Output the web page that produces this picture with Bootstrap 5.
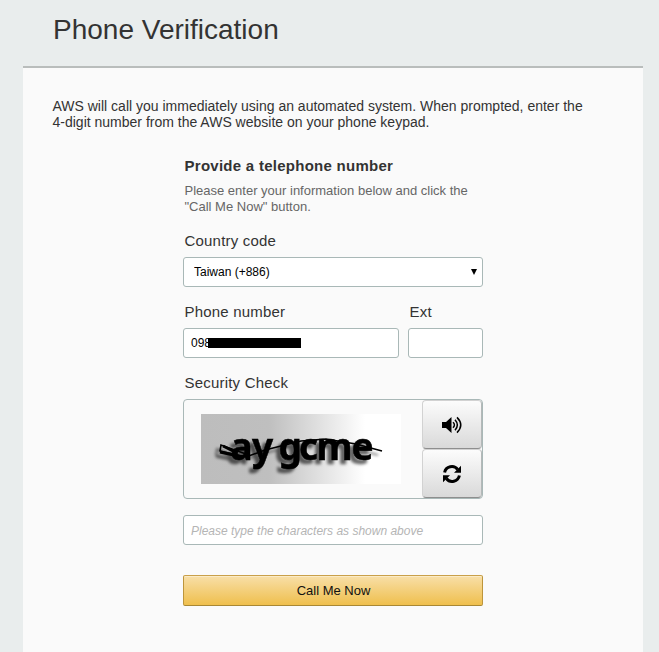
<!DOCTYPE html>
<html lang="en">
<head>
<meta charset="utf-8">
<meta name="viewport" content="width=device-width, initial-scale=1">
<title>Phone Verification</title>
<link href="https://cdn.jsdelivr.net/npm/bootstrap@5.3.0/dist/css/bootstrap.min.css" rel="stylesheet">
<style>
body{background:#e9eded;font-family:"Liberation Sans",Arial,sans-serif;color:#333;height:652px;overflow:hidden}
.page-head{height:66px;padding:13px 0 0 53px}
.page-head h1{font-size:28px;line-height:34px;letter-spacing:0}
.panel{margin:0 16px 0 23px;height:586px;background:#fafafa;border-top:2px solid #b9bdbc;padding:30px 30px 0 29.5px}
.intro{font-size:14px;line-height:16px;width:540px}
.verify{width:300px;margin:26px 0 0 130.5px}
.verify h2{font-size:15px;line-height:20px;letter-spacing:.27px;padding-left:1.5px}
.hint{font-size:13px;line-height:16px;color:#666;padding-left:1.5px;margin-top:7px}
.verify label{display:block;font-size:15px;line-height:20px;letter-spacing:.2px;padding-left:1.5px;margin-bottom:6px}
.verify .country-label{margin-top:16px}
.verify .form-control,.verify .form-select{height:30px;min-height:0;border:1px solid #a9b8b7;border-radius:3px;padding:0 7px;font-size:12px;line-height:28px;color:#000;background-color:#fff}
.verify .form-select{padding:0 10px;background-image:none}
.select-wrap::after{content:"";position:absolute;right:6px;top:12px;border:3.5px solid transparent;border-top:6px solid #000;border-bottom:0}
.number-row{margin-top:15px;gap:9px}
.phone-cell{width:216px}
.ext-cell{width:75px}
.redact{position:absolute;left:25px;top:10px;width:93px;height:10px;background:#000}
.verify .check-label{margin-top:15px}
.captcha{height:100px;border:1px solid #a9b8b7;border-radius:4px}
.captcha-art{margin:14px 0 0 17px}
.tool{width:60px;height:49px;padding:0;border:1px solid #d2d2d2;border-bottom-color:#8e8e8e;border-right-color:#b4b8b8;border-radius:4px;background:linear-gradient(#fcfcfc,#d9d9d9)}
.tool svg{display:block;margin:auto}
.verify .guess{margin-top:16px;padding-top:1px}
.verify .form-control::placeholder{font-style:italic;color:#b5b5b5;opacity:1}
.btn-call{margin-top:30px;height:31px;padding:0 0 0 1px;border:1px solid #bd953b;border-top-color:#c9a04a;border-bottom-color:#a88734;border-radius:2px;background:linear-gradient(#f8dfa8,#efbf4d);box-shadow:inset 0 1px 0 #fbebc6;font-size:13px;line-height:29px;color:#111}
</style>
</head>
<body>
<header class="page-head"><h1 class="m-0 fw-normal">Phone Verification</h1></header>
<main class="panel">
  <p class="intro m-0">AWS will call you immediately using an automated system. When prompted, enter the<br>4-digit number from the AWS website on your phone keypad.</p>
  <form class="verify">
    <h2 class="fw-bold m-0">Provide a telephone number</h2>
    <p class="hint mb-0">Please enter your information below and click the<br>"Call Me Now" button.</p>
    <label for="country" class="country-label">Country code</label>
    <div class="select-wrap position-relative">
      <select id="country" class="form-select"><option>Taiwan (+886)</option></select>
    </div>
    <div class="d-flex number-row">
      <div class="phone-cell"><label for="phone">Phone number</label>
        <div class="position-relative"><input id="phone" class="form-control" value="098"><span class="redact"></span></div></div>
      <div class="ext-cell"><label for="ext">Ext</label><input id="ext" class="form-control"></div>
    </div>
    <label for="guess" class="check-label">Security Check</label>
    <div class="captcha d-flex justify-content-between">
      <svg class="captcha-art" width="200" height="70" viewBox="0 0 200 70">
        <defs>
          <linearGradient id="bg"><stop offset="0" stop-color="#bdbdbd"/><stop offset=".34" stop-color="#bfbfbf"/><stop offset=".82" stop-color="#fff"/></linearGradient>
          <filter id="cast" x="-10%" y="-30%" width="120%" height="170%"><feDropShadow dx="-4" dy="4" stdDeviation="1.6" flood-opacity=".6"/></filter>
        </defs>
        <rect width="200" height="70" fill="url(#bg)"/>
        <g filter="url(#cast)">
          <text x="29.5 51 77.5 98 115.5 150.5" y="45.5" font-family="'Noto Sans',sans-serif" font-weight="700" font-size="37" stroke="#000" stroke-width=".5">aygcme</text>
          <path d="M45 40L20 31L19 37L45 43L64 36L100 27L125 25L155 30L181 37" fill="none" stroke="#000" stroke-width="1.6"/>
          <path d="M19 38L42 43M22 32L36 39" stroke="#000" stroke-width="3"/>
        </g>
      </svg>
      <div class="d-flex flex-column">
        <button type="button" class="tool" aria-label="Play audio">
          <svg width="20" height="18" viewBox="0 0 20 18"><path d="M0 6h4l5.5-5v16l-5.5-5H0z"/><path d="M11 6.3q2.8 2.7 0 5.4M13 3.8q4.7 5.2 0 10.4M15 1.4q7.5 7.6 0 15.2" fill="none" stroke="#000" stroke-width="1.5"/></svg>
        </button>
        <button type="button" class="tool" aria-label="Refresh">
          <svg width="18" height="18" viewBox="0 0 18 18"><path d="M1.6 7.5a7.4 7.4 0 0 1 13.1-3M16.4 10.5a7.4 7.4 0 0 1-13.1 3" fill="none" stroke="#000" stroke-width="3"/><path d="M18 .8v7h-7zM0 17.2v-7h7z"/></svg>
        </button>
      </div>
    </div>
    <input id="guess" class="form-control guess" placeholder="Please type the characters as shown above">
    <button type="button" class="btn btn-call w-100 d-block">Call Me Now</button>
  </form>
</main>
<script src="https://cdn.jsdelivr.net/npm/bootstrap@5.3.0/dist/js/bootstrap.bundle.min.js"></script>
</body>
</html>
